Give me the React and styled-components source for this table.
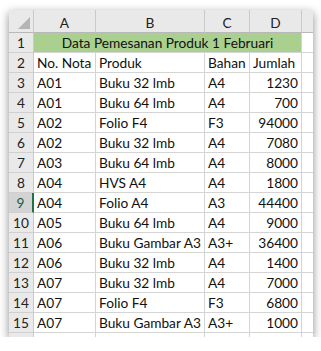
import React from "react";
import styled, { createGlobalStyle } from "styled-components";

const Global = createGlobalStyle`
  html, body { margin: 0; padding: 0; background: #fff; }
  body { font-family: Lato, "Open Sans", sans-serif; }
`;

const Page = styled.div`
  padding: 10px 8px 0 9px;
`;

const Frame = styled.div`
  width: 304px;
  height: 327px;
  overflow: hidden;
  background: #fff;
  box-shadow: 0 3px 9px rgba(0, 0, 0, 0.45);
`;

const Grid = styled.div`
  display: grid;
  grid-template-columns: 25px 62px 109px 45px 52px 30px;
  grid-template-rows: 23px;
  grid-auto-rows: 20px;
  font-size: 13.7px;
  color: #111;
`;

const Cell = styled.div`
  box-sizing: border-box;
  border-right: 1px solid #d4d4d4;
  border-bottom: 1px solid #d4d4d4;
  display: flex;
  align-items: center;
  padding: 0 3px;
  white-space: nowrap;
  overflow: hidden;
  justify-content: ${(p) => (p.$right ? "flex-end" : p.$center ? "center" : "flex-start")};
  background: ${(p) => p.$bg || "#fff"};
  grid-column: ${(p) => p.$span || "auto"};
`;

const ColHead = styled(Cell)`
  background: #e9e9e9;
  border-right-color: #c9c9c9;
  border-bottom-color: #b8b8b8;
  justify-content: center;
  padding-top: 2px;
  color: #222;
`;

const Corner = styled(ColHead)`
  position: relative;
  &::after {
    content: "";
    position: absolute;
    right: 3px;
    bottom: 3px;
    width: 0;
    height: 0;
    border-left: 12px solid transparent;
    border-bottom: 12px solid #b5b5b5;
  }
`;

const RowHead = styled(Cell)`
  background: ${(p) => (p.$sel ? "#d3d3d3" : "#e9e9e9")};
  border-right: ${(p) => (p.$sel ? "2px solid #217346" : "1px solid #c9c9c9")};
  border-bottom-color: #d0d0d0;
  justify-content: center;
  color: ${(p) => (p.$sel ? "#1d5c3a" : "#222")};
`;

const rows = [
  ["A01", "Buku 32 lmb", "A4", 1230],
  ["A01", "Buku 64 lmb", "A4", 700],
  ["A02", "Folio F4", "F3", 94000],
  ["A02", "Buku 32 lmb", "A4", 7080],
  ["A03", "Buku 64 lmb", "A4", 8000],
  ["A04", "HVS A4", "A4", 1800],
  ["A04", "Folio A4", "A3", 44400],
  ["A05", "Buku 64 lmb", "A4", 9000],
  ["A06", "Buku Gambar A3", "A3+", 36400],
  ["A06", "Buku 32 lmb", "A4", 1400],
  ["A07", "Buku 32 lmb", "A4", 7000],
  ["A07", "Folio F4", "F3", 6800],
  ["A07", "Buku Gambar A3", "A3+", 1000],
];

export default function App() {
  return (
    <Page>
      <Global />
      <Frame>
        <Grid>
          <Corner />
          {["A", "B", "C", "D", ""].map((c, i) => (
            <ColHead key={i}>{c}</ColHead>
          ))}

          <RowHead>1</RowHead>
          <Cell $span="span 4" $center $bg="#a9d08e">
            Data Pemesanan Produk 1 Februari
          </Cell>
          <Cell />

          <RowHead>2</RowHead>
          <Cell>No. Nota</Cell>
          <Cell>Produk</Cell>
          <Cell>Bahan</Cell>
          <Cell>Jumlah</Cell>
          <Cell />

          {rows.map((r, i) => (
            <React.Fragment key={i}>
              <RowHead $sel={i + 3 === 9}>{i + 3}</RowHead>
              <Cell>{r[0]}</Cell>
              <Cell>{r[1]}</Cell>
              <Cell>{r[2]}</Cell>
              <Cell $right>{r[3]}</Cell>
              <Cell />
            </React.Fragment>
          ))}

          <RowHead>16</RowHead>
          {[0, 1, 2, 3, 4].map((k) => (
            <Cell key={k} />
          ))}
        </Grid>
      </Frame>
    </Page>
  );
}
